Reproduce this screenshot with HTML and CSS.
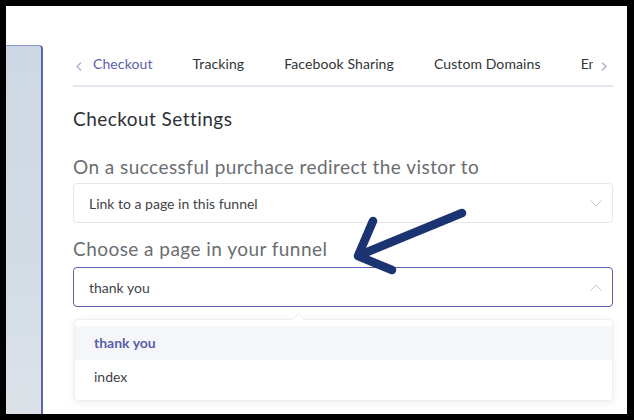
FILE: index.html
```html
<!DOCTYPE html>
<html>
<head>
<meta charset="utf-8">
<link rel="stylesheet" href="styles.css">
</head>
<body>
<div class="frame">
  <aside class="sidebar"></aside>
  <main class="content">
    <nav class="tabs">
      <span class="chev chev-left"><svg width="6" height="9" viewBox="0 0 6 9"><path d="M5 0.5L1 4.5L5 8.5" fill="none" stroke="#a9adc4" stroke-width="1.2"/></svg></span>
      <div class="tab-viewport">
        <span class="tab active">Checkout</span>
        <span class="tab">Tracking</span>
        <span class="tab">Facebook Sharing</span>
        <span class="tab">Custom Domains</span>
        <span class="tab">Email</span>
      </div>
      <span class="chev chev-right"><svg width="6" height="9" viewBox="0 0 6 9"><path d="M1 0.5L5 4.5L1 8.5" fill="none" stroke="#a9adc4" stroke-width="1.2"/></svg></span>
    </nav>
    <h2 class="title">Checkout Settings</h2>
    <label class="label label-first">On a successful purchace redirect the vistor to</label>
    <div class="select">
      <span>Link to a page in this funnel</span>
      <svg width="12" height="7" viewBox="0 0 12 7"><path d="M0.5 0.5L6 6L11.5 0.5" fill="none" stroke="#c4c7cf" stroke-width="1"/></svg>
    </div>
    <label class="label label-second">Choose a page in your funnel</label>
    <div class="select select-open">
      <span>thank you</span>
      <svg width="12" height="7" viewBox="0 0 12 7"><path d="M0.5 6.5L6 1L11.5 6.5" fill="none" stroke="#c4c7cf" stroke-width="1"/></svg>
    </div>
    <div class="dropdown">
      <div class="option selected">thank you</div>
      <div class="option">index</div>
    </div>
  </main>
</div>
<svg class="arrow" width="634" height="420" viewBox="0 0 634 420">
  <g fill="none" stroke="#1b3370" stroke-width="8.5" stroke-linecap="round" stroke-linejoin="round">
    <path d="M462 213L360 255"/>
    <path d="M373 221L358 256L392 270"/>
  </g>
</svg>
</body>
</html>
```

FILE: styles.css
```css
html, body {
  margin: 0;
  padding: 0;
}
body {
  background: #000;
  position: relative;
  width: 634px;
  height: 420px;
  overflow: hidden;
  font-family: "Lato", "Liberation Sans", sans-serif;
}
.frame {
  position: absolute;
  left: 6px;
  top: 6px;
  width: 621px;
  height: 408px;
  background: #fff;
  display: flex;
  overflow: hidden;
}
.sidebar {
  margin-top: 39px;
  width: 35px;
  flex: none;
  background: linear-gradient(180deg, #ccd8e3 0%, #d3dce5 60%, #dce2e8 100%);
  border-top: 1px solid #8f93c8;
  border-right: 2px solid #5f62b5;
  border-top-right-radius: 4px;
}
.content {
  margin-left: 30px;
  width: 540px;
  padding-top: 48px;
  display: flex;
  flex-direction: column;
}
.tabs {
  display: flex;
  align-items: stretch;
  border-bottom: 2px solid #e3e6ee;
  height: 31px;
}
.chev {
  width: 15px;
  flex: none;
  display: flex;
  align-items: flex-start;
  padding-top: 8px;
  box-sizing: border-box;
}
.chev-left { padding-left: 3px; }
.chev-right { justify-content: flex-end; padding-right: 6px; width: 20px; }
.tab-viewport {
  flex: 1;
  display: flex;
  gap: 40px;
  padding-left: 5px;
  overflow: hidden;
  white-space: nowrap;
}
.tab {
  font-size: 14px;
  line-height: 20px;
  letter-spacing: 0.1px;
  color: #2f3438;
  padding-bottom: 9px;
  flex: none;
}
.tab.active {
  color: #5b5ea8;
  border-bottom: 2px solid #5c5fb3;
  margin-bottom: -2px;
}
.title {
  margin: 20px 0 0;
  font-size: 19px;
  line-height: 24px;
  font-weight: 400;
  letter-spacing: 0.45px;
  color: #2b3036;
}
.label {
  display: block;
  font-size: 19px;
  line-height: 24px;
  letter-spacing: 0.45px;
  color: #6a6d71;
}
.label-first { margin-top: 24px; }
.label-second { margin-top: 14px; }
.select {
  margin-top: 4px;
  height: 40px;
  box-sizing: border-box;
  border: 1px solid #e4e6ea;
  border-radius: 4px;
  display: flex;
  align-items: center;
  justify-content: space-between;
  padding: 0 10px 0 15px;
  font-size: 14px;
  color: #3f4348;
}
.select-open {
  margin-top: 6px;
  border-color: #5c5fb3;
}
.dropdown {
  position: relative;
  margin-top: 12px;
  margin-left: 1px;
  background: #fff;
  border: 1px solid #eceef2;
  border-radius: 4px;
  box-shadow: 0 2px 8px rgba(30, 40, 60, 0.08);
  padding: 6px 0 6px;
}
.dropdown::before {
  content: "";
  position: absolute;
  top: -5px;
  left: 219px;
  width: 8px;
  height: 8px;
  background: #fff;
  border-left: 1px solid #eceef2;
  border-top: 1px solid #eceef2;
  transform: rotate(45deg);
}
.option {
  height: 34px;
  line-height: 34px;
  padding-left: 19px;
  font-size: 14px;
  color: #3f4348;
}
.option.selected {
  background: #f5f6f9;
  color: #5b5ea8;
  font-weight: 700;
}
.arrow {
  position: absolute;
  left: 0;
  top: 0;
  pointer-events: none;
}
```
